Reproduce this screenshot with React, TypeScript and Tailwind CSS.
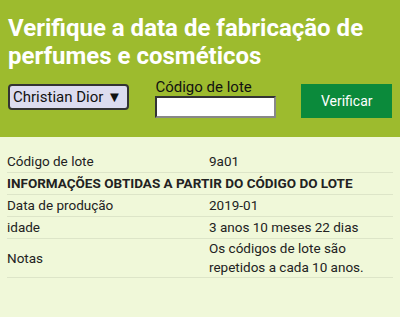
export default function App() {
  const rows = [
    { label: "Data de produção", value: "2019-01" },
    { label: "idade", value: "3 anos 10 meses 22 dias" },
  ];
  return (
    <div className="h-[317px] w-[400px] overflow-hidden bg-[#f0f8d9] font-['Roboto',sans-serif]">
      <header className="h-[137px] bg-[#9dbb2e] px-2 pt-[14px]">
        <h1 className="text-[24px] font-bold leading-[28px] text-white">
          Verifique a data de fabricação de perfumes e cosméticos
        </h1>
        <div className="mt-[8px] flex items-start">
          <div className="mt-[6px] flex h-[26px] w-[122px] items-center rounded-[4px] border-2 border-[#333] bg-[#dcdcef] pl-[3px] text-[15px] text-[#111]">
            Christian Dior ▼
          </div>
          <div className="ml-[26px] flex flex-col">
            <span className="text-[15px] leading-[18px] text-[#111]">Código de lote</span>
            <input className="h-[22px] w-[121px] border-2 border-t-[#333] border-l-[#333] border-r-[#888] border-b-[#888] bg-white outline-none" />
          </div>
          <button className="ml-[25px] mt-[6px] h-[34px] w-[91px] bg-[#0b8a3b] text-[14px] text-white">
            Verificar
          </button>
        </div>
      </header>
      <div className="px-[7px] pt-[13px] text-[13.5px] text-[#222]">
        <div className="flex h-[23px] items-center border-b border-[#dde5c8]">
          <span className="w-[202px]">Código de lote</span>
          <span>9a01</span>
        </div>
        <div className="flex h-[22px] items-center border-b border-[#dde5c8] font-bold">
          INFORMAÇÕES OBTIDAS A PARTIR DO CÓDIGO DO LOTE
        </div>
        {rows.map((r) => (
          <div key={r.label} className="flex h-[22px] items-center border-b border-[#dde5c8]">
            <span className="w-[202px]">{r.label}</span>
            <span>{r.value}</span>
          </div>
        ))}
        <div className="flex items-center border-b border-[#dde5c8] leading-[19px]">
          <span className="w-[202px]">Notas</span>
          <span>
            Os códigos de lote são
            <br />
            repetidos a cada 10 anos.
          </span>
        </div>
      </div>
    </div>
  );
}
